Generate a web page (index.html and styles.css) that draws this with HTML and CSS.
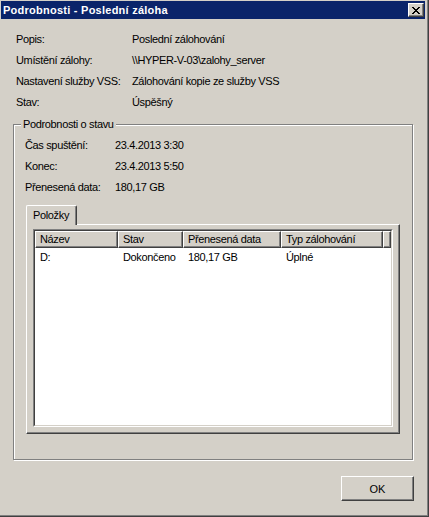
FILE: index.html
```html
<!DOCTYPE html>
<html lang="cs">
<head>
<meta charset="utf-8">
<title>Podrobnosti - Poslední záloha</title>
<link rel="stylesheet" href="styles.css">
</head>
<body>
<div class="window">
  <div class="titlebar">
    <span class="title">Podrobnosti - Poslední záloha</span>
    <button class="close" type="button" aria-label="Zavřít">
      <svg width="8" height="7" viewBox="0 0 8 7"><path fill="#000" d="M0 0h2v1h-2zM6 0h2v1h-2zM1 1h2v1h-2zM5 1h2v1h-2zM2 2h4v1h-4zM3 3h2v1h-2zM2 4h4v1h-4zM1 5h2v1h-2zM5 5h2v1h-2zM0 6h2v1h-2zM6 6h2v1h-2z"/></svg>
    </button>
  </div>
  <div class="content">
    <div class="props">
      <span>Popis:</span><span>Poslední zálohování</span>
      <span>Umístění zálohy:</span><span>\\HYPER-V-03\zalohy_server</span>
      <span>Nastavení služby VSS:</span><span>Zálohování kopie ze služby VSS</span>
      <span>Stav:</span><span>Úspěšný</span>
    </div>
    <div class="group">
      <div class="legend">Podrobnosti o stavu</div>
      <div class="props props-inner">
        <span>Čas spuštění:</span><span>23.4.2013 3:30</span>
        <span>Konec:</span><span>23.4.2013 5:50</span>
        <span>Přenesená data:</span><span>180,17 GB</span>
      </div>
      <div class="tabs">
        <div class="tabstrip"><div class="tab">Položky</div></div>
        <div class="tabpanel">
          <div class="listview">
            <div class="lv-inner">
              <div class="lv-header">
                <div class="hcell c1">Název</div>
                <div class="hcell c2">Stav</div>
                <div class="hcell c3">Přenesená data</div>
                <div class="hcell c4">Typ zálohování</div>
                <div class="hcell c5"></div>
              </div>
              <div class="lv-row">
                <div class="cell c1">D:</div>
                <div class="cell c2">Dokončeno</div>
                <div class="cell c3">180,17 GB</div>
                <div class="cell c4">Úplné</div>
              </div>
            </div>
          </div>
        </div>
      </div>
    </div>
    <div class="footer">
      <button class="btn" type="button">OK</button>
    </div>
  </div>
</div>
</body>
</html>
```
FILE: styles.css
```css
* { box-sizing: border-box; }
html, body { margin: 0; padding: 0; background: #d4d0c8; }
body {
  font-family: "Liberation Sans", Arial, sans-serif;
  font-size: 11px;
  letter-spacing: -0.35px;
  color: #000;
}
.window {
  width: 429px;
  height: 517px;
  background: #d4d0c8;
  padding: 1px 3px 0 1px;
  border-right: 1px solid #404040;
  border-bottom: 1px solid #404040;
  box-shadow: inset -1px -1px #808080;
  display: flex;
  flex-direction: column;
}
.titlebar {
  height: 18px;
  background: #0a246a;
  display: flex;
  align-items: center;
  justify-content: space-between;
  padding: 0 1px 0 2px;
}
.title {
  color: #fff;
  font-weight: bold;
  letter-spacing: 0.25px;
  line-height: 18px;
  white-space: nowrap;
}
.close {
  width: 16px;
  height: 14px;
  padding: 0;
  margin: 0;
  background: #d4d0c8;
  border-top: 1px solid #fff;
  border-left: 1px solid #fff;
  border-right: 1px solid #404040;
  border-bottom: 1px solid #404040;
  box-shadow: inset -1px -1px #808080;
  display: flex;
  align-items: center;
  justify-content: center;
}
.close svg { display: block; margin-left: 0; }
.content {
  flex: 1;
  padding-top: 10px;
}
.props {
  display: grid;
  grid-template-columns: 116px auto;
  line-height: 21px;
  padding-left: 15px;
  white-space: nowrap;
}
.group {
  margin: 11px 0 0 12px;
  width: 400px;
  height: 336px;
  border: 1px solid #808080;
  box-shadow: inset 1px 1px #fff, 1px 1px #fff;
}
.legend {
  width: fit-content;
  margin: -7px 0 0 7px;
  padding: 0 2px;
  line-height: 13px;
  background: #d4d0c8;
}
.props-inner {
  grid-template-columns: 90px auto;
  margin-top: 4px;
  padding-left: 11px;
}
.tabs {
  margin: 7px 0 0 12px;
  width: 374px;
}
.tabstrip {
  display: flex;
  position: relative;
  z-index: 1;
}
.tab {
  width: 51px;
  height: 20px;
  margin-bottom: -1px;
  padding: 0 0 1px 6px;
  line-height: 18px;
  background: #d4d0c8;
  border-top: 1px solid #fff;
  border-left: 1px solid #fff;
  border-right: 1px solid #404040;
  box-shadow: inset -1px 0 #808080;
  border-radius: 2px 2px 0 0;
}
.tabpanel {
  height: 210px;
  padding: 4px 6px 6px 6px;
  border-top: 1px solid #fff;
  border-left: 1px solid #fff;
  border-right: 1px solid #404040;
  border-bottom: 1px solid #404040;
  box-shadow: inset -1px -1px #808080;
}
.listview {
  width: 360px;
  height: 198px;
  border-top: 1px solid #808080;
  border-left: 1px solid #808080;
  border-right: 1px solid #fff;
  border-bottom: 1px solid #fff;
}
.lv-inner {
  height: 100%;
  background: #fff;
  border-top: 1px solid #404040;
  border-left: 1px solid #404040;
  border-right: 1px solid #d4d0c8;
  border-bottom: 1px solid #d4d0c8;
}
.lv-header, .lv-row { display: flex; white-space: nowrap; }
.hcell {
  height: 17px;
  line-height: 15px;
  padding-left: 4px;
  background: #d4d0c8;
  border-top: 1px solid #fff;
  border-left: 1px solid #fff;
  border-right: 1px solid #404040;
  border-bottom: 1px solid #404040;
  box-shadow: inset -1px -1px #808080;
  overflow: hidden;
}
.cell {
  line-height: 16px;
  padding: 1px 0 0 5px;
  overflow: hidden;
}
.c1 { width: 83px; }
.c2 { width: 65px; }
.c3 { width: 98px; }
.c4 { width: 102px; }
.c5 { width: 8px; padding-left: 0; }
.footer {
  display: flex;
  justify-content: flex-end;
  margin-top: 16px;
  padding-right: 11px;
}
.btn {
  width: 73px;
  height: 25px;
  padding: 0;
  font: inherit;
  letter-spacing: 0;
  color: #000;
  background: #d4d0c8;
  border-top: 1px solid #fff;
  border-left: 1px solid #fff;
  border-right: 1px solid #404040;
  border-bottom: 1px solid #404040;
  box-shadow: inset -1px -1px #808080;
}
```
